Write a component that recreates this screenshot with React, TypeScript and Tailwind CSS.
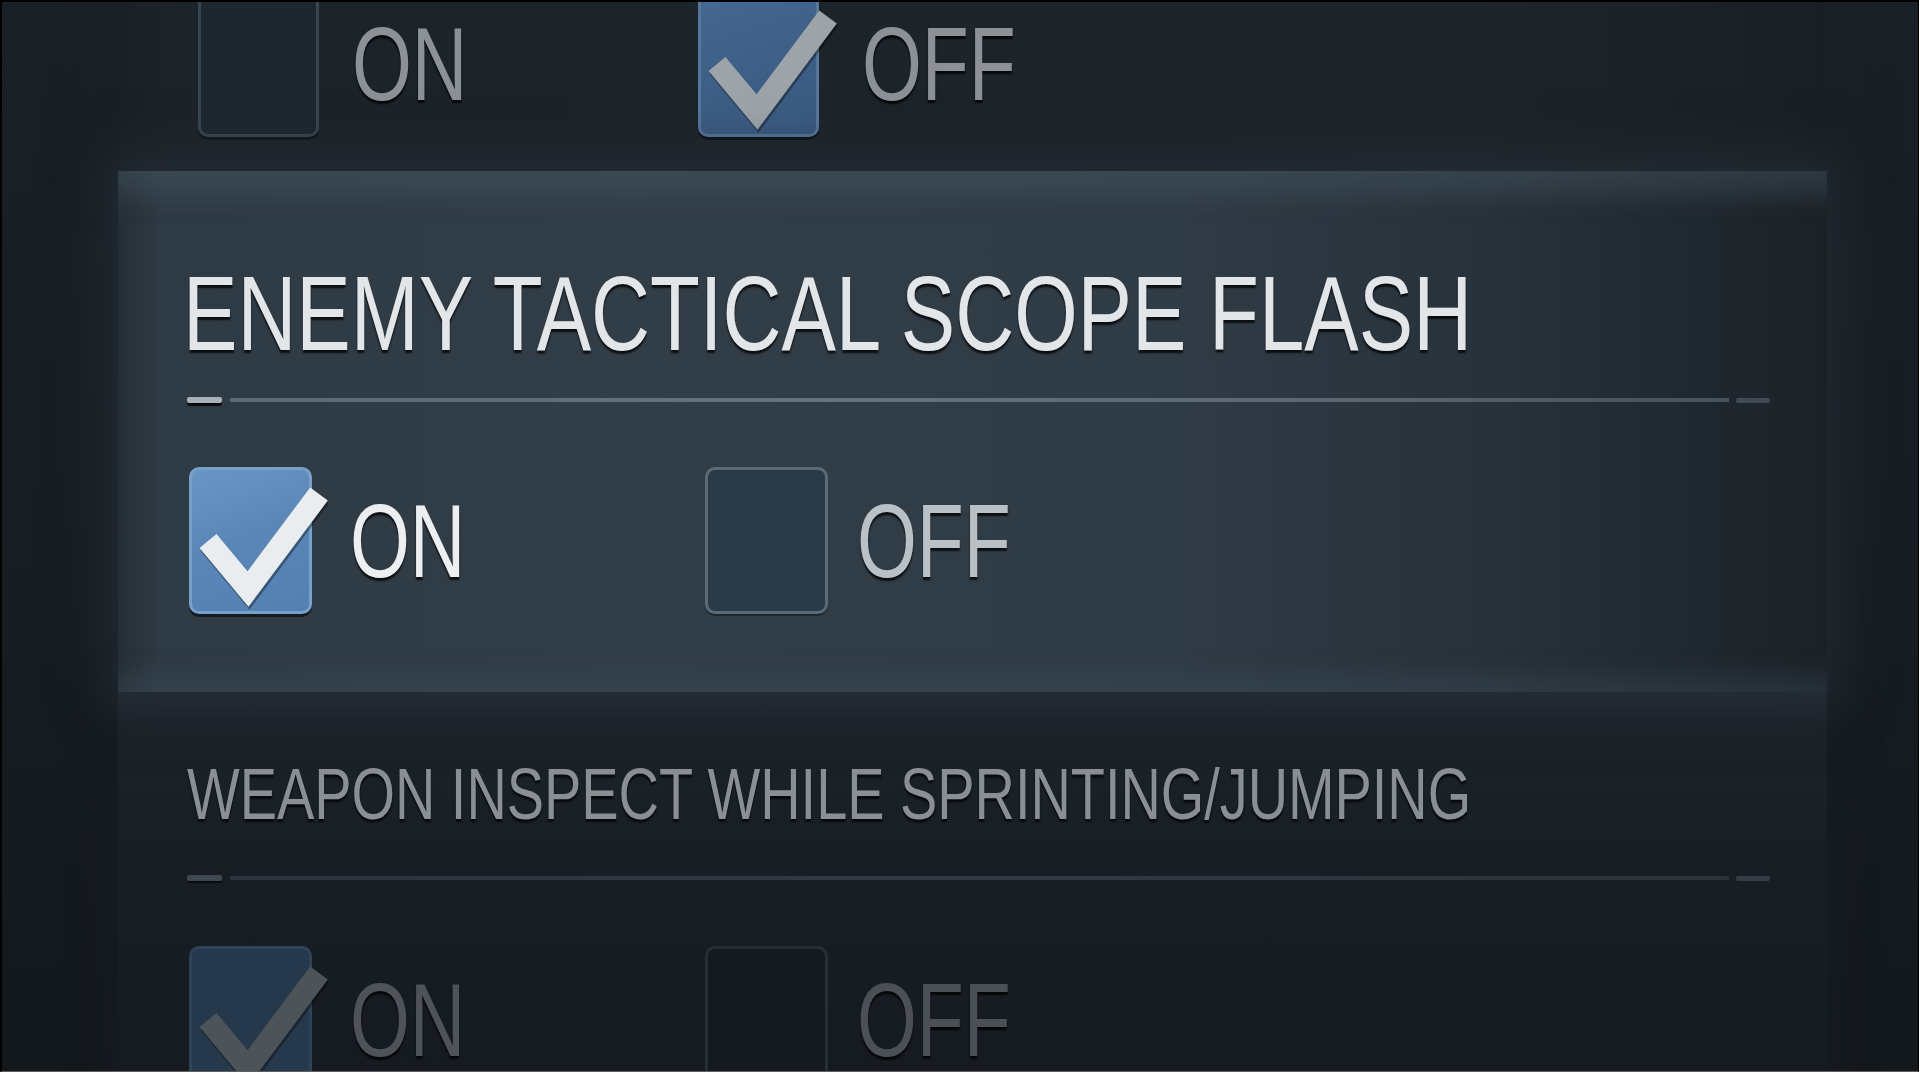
import React from "react";

type Tone = "top" | "active" | "dim";

const FONT = "font-['Liberation_Sans',Arial,sans-serif]";

function Check({ color }: { color: string }) {
  return (
    <svg
      className="absolute left-0 top-0 overflow-visible"
      width="123"
      height="147"
      viewBox="0 0 123 147"
      fill="none"
    >
      <polyline
        points="19,74 59,122 130,27"
        stroke="rgba(0,0,0,0.35)"
        strokeWidth="22"
        strokeLinejoin="miter"
        strokeLinecap="butt"
        transform="translate(1,3)"
      />
      <polyline
        points="19,74 59,122 130,27"
        stroke={color}
        strokeWidth="22"
        strokeLinejoin="miter"
        strokeLinecap="butt"
      />
    </svg>
  );
}

function Box({ checked, tone, narrow }: { checked: boolean; tone: Tone; narrow?: boolean }) {
  const size = narrow ? "w-[121px] h-[147px]" : "w-[123px] h-[147px]";
  let cls = "";
  let checkColor = "#e9edf0";
  if (tone === "active") {
    cls = checked
      ? "bg-[linear-gradient(160deg,#6a95c4_0%,#5b87b8_45%,#5380b1_100%)] border-[3px] border-[#77a0cb] shadow-[0_3px_0_rgba(0,0,0,0.55)]"
      : "bg-[#2a3b47] border-[3px] border-[#5a6b77] shadow-[0_2px_0_rgba(0,0,0,0.35)]";
    checkColor = "#e9edf0";
  } else if (tone === "top") {
    cls = checked
      ? "bg-[linear-gradient(160deg,#466991_0%,#3e5f86_50%,#3a5a80_100%)] border-[3px] border-[#56779c] shadow-[0_3px_0_rgba(0,0,0,0.5)]"
      : "bg-[#1c2730] border-[3px] border-[#384651] shadow-[0_3px_0_rgba(0,0,0,0.4)]";
    checkColor = "#9ca3a9";
  } else {
    cls = checked
      ? "bg-[#26394c] border-[3px] border-[#2e4357]"
      : "bg-[#141a1f] border-[3px] border-[#272e35]";
    checkColor = "#4c545a";
  }
  return (
    <div className={`relative shrink-0 ${size}`}>
      <div className={`w-full h-full rounded-[10px] ${cls}`} />
      {checked && <Check color={checkColor} />}
    </div>
  );
}

function Label({ text, color }: { text: string; color: string }) {
  return (
    <div
      className={`${FONT} text-[104px] leading-none whitespace-nowrap ${color} [text-shadow:0_3px_2px_rgba(0,0,0,0.75)]`}
    >
      <span className="inline-block scale-x-[0.74] origin-left">{text}</span>
    </div>
  );
}

function Divider({ bright }: { bright: boolean }) {
  return (
    <div className="flex items-center h-[6px]">
      <div
        className={`w-[35px] h-[6px] rounded-[2px] ${
          bright
            ? "bg-[#a9b1b8] shadow-[0_3px_1px_rgba(0,0,0,0.8)]"
            : "bg-[#3f4952] shadow-[0_2px_1px_rgba(0,0,0,0.6)]"
        }`}
      />
      <div
        className={`ml-[8px] flex-1 h-[4px] ${
          bright
            ? "bg-[linear-gradient(90deg,#5d6973_0%,#66727c_40%,#5a6670_75%,#46515b_100%)]"
            : "bg-[linear-gradient(90deg,#2b343c_0%,#313a43_50%,#2a323a_100%)]"
        }`}
      />
      <div
        className={`ml-[7px] w-[34px] h-[5px] rounded-[2px] ${
          bright ? "bg-[#3f4a54]" : "bg-[#343d46]"
        }`}
      />
    </div>
  );
}

export default function App() {
  return (
    <div className="w-[1920px] h-[1080px] bg-white overflow-hidden">
      <div className="w-[1919px] h-[1072px] overflow-hidden border-l-2 border-t-2 border-r border-b border-black border-b-[#5d5f61] bg-[linear-gradient(180deg,#192026_0%,#171d22_50%,#13181c_100%)]">
        <div className="flex flex-col mt-[-2px]">
          {/* Section 1 (partially visible) */}
          <div className="ml-[116px] w-[1709px] h-[171px] pl-[80px] bg-[linear-gradient(90deg,#1a2026_0%,#1c2329_3%,#1d242a_80%,#1a2026_97%,#181e23_100%)] shadow-[0_0_40px_16px_rgba(27,33,39,0.6)]">
            <div className="flex items-center mt-[-10px]">
              <div className="flex items-center w-[500px]">
                <Box checked={false} tone="top" narrow />
                <div className="ml-[33px]">
                  <Label text="ON" color="text-[#8b9197]" />
                </div>
              </div>
              <div className="flex items-center">
                <Box checked={true} tone="top" narrow />
                <div className="ml-[43px]">
                  <Label text="OFF" color="text-[#8b9197]" />
                </div>
              </div>
            </div>
          </div>

          {/* Section 2 (highlighted) */}
          <div className="relative z-10 ml-[116px] w-[1709px] pt-[90px] pb-[78px] pl-[69px] pr-[57px] bg-[linear-gradient(90deg,#252f37_0%,#2e3a44_2.5%,#313d47_30%,#2f3b45_62%,#27323b_80%,#1f272e_94%,#1b2228_100%)] shadow-[0_0_44px_16px_rgba(36,46,55,0.75),inset_0_46px_26px_-22px_rgba(80,97,110,0.35),inset_0_-40px_26px_-24px_rgba(70,86,98,0.3)]">
            <div
              className={`${FONT} h-[105px] text-[105px] leading-none whitespace-nowrap text-[#e3e6e9] ml-[-4px] [text-shadow:0_3px_2px_rgba(0,0,0,0.75)]`}
            >
              <span className="inline-block scale-x-[0.777] origin-left">
                ENEMY TACTICAL SCOPE FLASH
              </span>
            </div>
            <div className="mt-[31px]">
              <Divider bright />
            </div>
            <div className="mt-[64px] flex items-center pl-[2px]">
              <div className="flex items-center w-[516px]">
                <Box checked={true} tone="active" />
                <div className="ml-[38px]">
                  <Label text="ON" color="text-[#eceef0]" />
                </div>
              </div>
              <div className="flex items-center">
                <Box checked={false} tone="active" />
                <div className="ml-[29px]">
                  <Label text="OFF" color="text-[#b9c0c6]" />
                </div>
              </div>
            </div>
          </div>

          {/* Section 3 */}
          <div className="ml-[116px] w-[1709px] h-[420px] pt-[66px] pl-[69px] pr-[57px] bg-[linear-gradient(180deg,#222a32_0%,#1c232a_6%,#181e24_40%,#141a1f_100%)] shadow-[0_0_30px_10px_rgba(24,30,36,0.6)]">
            <div
              className={`${FONT} h-[72px] text-[72px] leading-none whitespace-nowrap text-[#898f95] [text-shadow:0_3px_2px_rgba(0,0,0,0.7)]`}
            >
              <span className="inline-block scale-x-[0.776] origin-left">
                WEAPON INSPECT WHILE SPRINTING/JUMPING
              </span>
            </div>
            <div className="mt-[45px]">
              <Divider bright={false} />
            </div>
            <div className="mt-[65px] flex items-center pl-[2px]">
              <div className="flex items-center w-[516px]">
                <Box checked={true} tone="dim" />
                <div className="ml-[38px]">
                  <Label text="ON" color="text-[#4d5359]" />
                </div>
              </div>
              <div className="flex items-center">
                <Box checked={false} tone="dim" />
                <div className="ml-[29px]">
                  <Label text="OFF" color="text-[#4a5056]" />
                </div>
              </div>
            </div>
          </div>
        </div>
      </div>
    </div>
  );
}
